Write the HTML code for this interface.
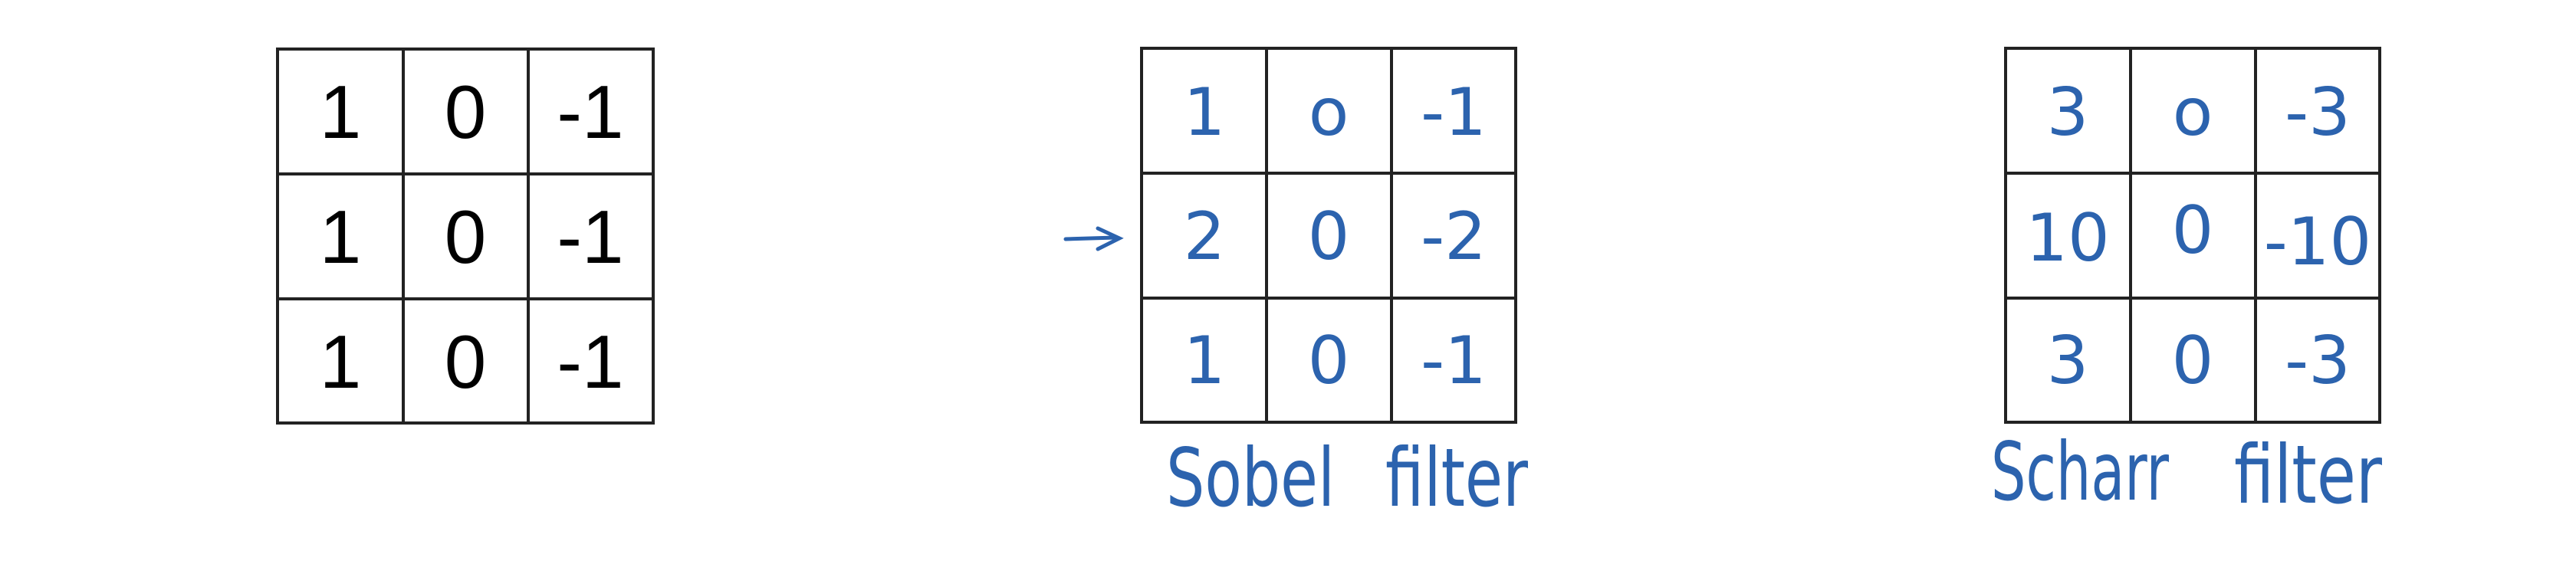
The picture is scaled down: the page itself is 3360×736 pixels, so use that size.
<!DOCTYPE html>
<html><head><meta charset="utf-8"><style>
html,body{margin:0;padding:0;background:#fff;width:3360px;height:736px;overflow:hidden}
svg{display:block}
</style></head><body>
<svg width="3360" height="736" xmlns="http://www.w3.org/2000/svg">
<rect width="3360" height="736" fill="#fff"/>
<g stroke="#222" stroke-width="4" fill="none">
<rect x="362" y="64" width="490" height="488"/>
<line x1="526" y1="64" x2="526" y2="552"/><line x1="689" y1="64" x2="689" y2="552"/>
<line x1="362" y1="227" x2="852" y2="227"/><line x1="362" y1="390" x2="852" y2="390"/>
<rect x="1489" y="63" width="488" height="488"/>
<line x1="1652" y1="63" x2="1652" y2="551"/><line x1="1815" y1="63" x2="1815" y2="551"/>
<line x1="1489" y1="226" x2="1977" y2="226"/><line x1="1489" y1="389" x2="1977" y2="389"/>
<rect x="2616" y="63" width="488" height="488"/>
<line x1="2779" y1="63" x2="2779" y2="551"/><line x1="2942" y1="63" x2="2942" y2="551"/>
<line x1="2616" y1="226" x2="3104" y2="226"/><line x1="2616" y1="389" x2="3104" y2="389"/>
</g>
<g font-family="Liberation Sans, sans-serif" font-size="98" fill="#000" text-anchor="middle">
<text x="444" y="180">1</text><text x="607" y="180">0</text><text x="770" y="180">-1</text>
<text x="444" y="343">1</text><text x="607" y="343">0</text><text x="770" y="343">-1</text>
<text x="444" y="506">1</text><text x="607" y="506">0</text><text x="770" y="506">-1</text>
</g>
<g font-family="DejaVu Sans, sans-serif" font-size="86" fill="#2c63ae" text-anchor="middle">
<text x="1571" y="176">1</text><text x="1733" y="176">o</text><text x="1896" y="176">-1</text>
<text x="1571" y="338">2</text><text x="1733" y="338">0</text><text x="1896" y="338">-2</text>
<text x="1571" y="500">1</text><text x="1733" y="500">0</text><text x="1896" y="500">-1</text>
<text x="2697" y="176">3</text><text x="2860" y="176">o</text><text x="3023" y="176">-3</text>
<text x="2697" y="340">10</text><text x="2860" y="330">0</text><text x="3023" y="345">-10</text>
<text x="2697" y="500">3</text><text x="2860" y="500">0</text><text x="3023" y="500">-3</text>
</g>
<g font-family="DejaVu Sans, sans-serif" font-size="105" fill="#2c63ae">
<text x="1521" y="660" textLength="220" lengthAdjust="spacingAndGlyphs">Sobel</text>
<text x="1807" y="660" textLength="186" lengthAdjust="spacingAndGlyphs">filter</text>
<text x="2597" y="652" textLength="232" lengthAdjust="spacingAndGlyphs">Scharr</text>
<text x="2914" y="656" textLength="193" lengthAdjust="spacingAndGlyphs">filter</text>
</g>
<path d="M1390 312 L1455 310 M1432 298 L1460 311 L1432 325" stroke="#2c63ae" stroke-width="5" fill="none" stroke-linecap="round"/>
</svg>
</body></html>
